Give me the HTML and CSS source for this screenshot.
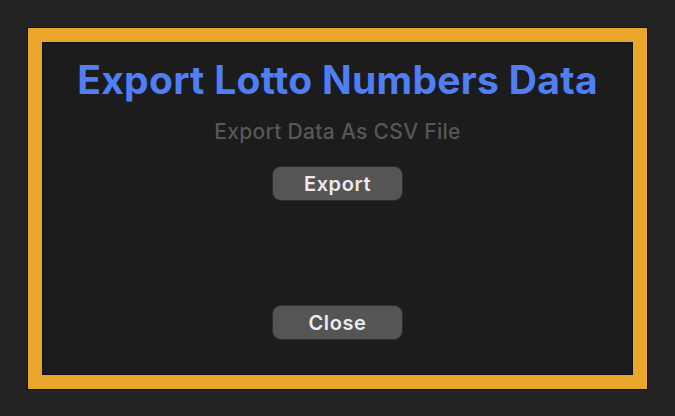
FILE: index.html
```html
<!DOCTYPE html>
<html>
<head>
<meta charset="utf-8">
<link rel="stylesheet" href="styles.css">
</head>
<body>
<div class="frame">
  <div class="panel">
    <h1 class="title">Export Lotto Numbers Data</h1>
    <p class="subtitle">Export Data As CSV File</p>
    <button class="btn btn-export">Export</button>
    <div class="spacer"></div>
    <button class="btn btn-close">Close</button>
  </div>
</div>
</body>
</html>
```
FILE: styles.css
```css
html, body {
  margin: 0;
  padding: 0;
}
body {
  background: #232323;
  width: 675px;
  height: 416px;
  padding: 27px;
  box-sizing: border-box;
  font-family: Inter, "Liberation Sans", sans-serif;
}
.frame {
  border: 1px solid #0e1322;
  background: #e9a62b;
  padding: 14px;
  height: 363px;
  box-sizing: border-box;
}
.panel {
  border: 1px solid #0e1322;
  background: #1c1c1c;
  height: 333px;
  box-sizing: border-box;
  display: flex;
  flex-direction: column;
  align-items: center;
}
.title {
  margin: 13px 0 0;
  font-size: 39px;
  font-weight: 700;
  color: #4f7ef7;
  line-height: 48px;
  letter-spacing: 0.3px;
}
.subtitle {
  margin: 15px 0 0;
  font-size: 21px;
  font-weight: 500;
  color: #575757;
  line-height: 26px;
  letter-spacing: 0.3px;
}
.btn {
  width: 131px;
  height: 35px;
  border: 1px solid #2e2e2e;
  border-radius: 9px;
  background: #555555;
  color: #ececec;
  font-family: inherit;
  font-size: 20px;
  font-weight: 600;
  letter-spacing: 0.6px;
  padding: 0;
}
.btn-export {
  margin-top: 21px;
}
.spacer {
  height: 104px;
}
```
